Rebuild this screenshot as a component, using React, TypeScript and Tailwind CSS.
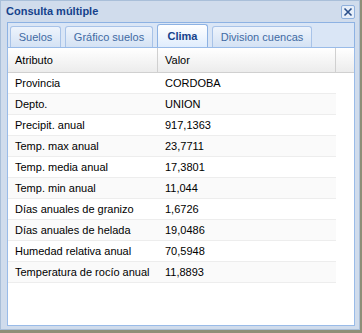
import React from 'react';

const rows: [string, string][] = [
  ['Provincia', 'CORDOBA'],
  ['Depto.', 'UNION'],
  ['Precipit. anual', '917,1363'],
  ['Temp. max anual', '23,7711'],
  ['Temp. media anual', '17,3801'],
  ['Temp. min anual', '11,044'],
  ['Días anuales de granizo', '1,6726'],
  ['Días anuales de helada', '19,0486'],
  ['Humedad relativa anual', '70,5948'],
  ['Temperatura de rocío anual', '11,8893'],
];

const tabs = [
  { label: 'Suelos', w: 'w-[51px]', active: false },
  { label: 'Gráfico suelos', w: 'w-[88px]', active: false },
  { label: 'Clima', w: 'w-[51px]', active: true },
  { label: 'Division cuencas', w: 'w-[100px]', active: false },
];

const App: React.FC = () => {
  return (
    <div className="w-[362px] h-[333px] bg-[#8e8e78] font-['Liberation_Sans',Arial,sans-serif] text-[11px]">
      <div className="w-[360px] h-[330px] flex flex-col border border-[#a9bfd9] bg-[#d0dcec]">
        {/* title bar */}
        <div className="h-[21px] flex items-center justify-between pl-[5px] pr-[4px]">
          <span className="font-bold text-[#15428b] leading-none">Consulta múltiple</span>
          <button className="w-[14px] h-[14px] mt-[1px] flex items-center justify-center border border-[#8fb0dc] bg-[#e6eef9] rounded-[2px]">
            <svg width="10" height="10" viewBox="0 0 10 10">
              <path d="M1.5 1.5 L8.5 8.5 M8.5 1.5 L1.5 8.5" stroke="#2a4f8a" strokeWidth="1.6" />
            </svg>
          </button>
        </div>

        <div className="ml-[6px] w-[348px] flex flex-col">
          {/* tab strip */}
          <div className="h-[25px] border-t border-l border-r border-[#8db2e3] bg-[#dae6f6] flex items-end pl-[2px] gap-[4px]">
            {tabs.map((t) =>
              t.active ? (
                <div
                  key={t.label}
                  className={`${t.w} h-[24px] -mb-[1px] flex items-center justify-center rounded-t-[3px] border border-b-0 border-[#8db2e3] bg-gradient-to-b from-white to-[#deecfd] font-bold text-[#15428b]`}
                >
                  {t.label}
                </div>
              ) : (
                <div
                  key={t.label}
                  className={`${t.w} h-[21px] flex items-center justify-center rounded-t-[3px] border border-b-0 border-[#a8c3e8] bg-gradient-to-b from-[#eef4fc] to-[#d4e2f4] text-[#416aa3]`}
                >
                  {t.label}
                </div>
              )
            )}
          </div>

          {/* body */}
          <div className="h-[279px] border border-[#99bbe8] bg-white text-black">
            <div className="h-[25px] flex border-b border-[#d0d0d0] bg-gradient-to-b from-white to-[#ececec]">
              <div className="w-[150px] flex items-center pl-[7px] border-r border-[#d0d0d0]">Atributo</div>
              <div className="w-[178px] flex items-center pl-[7px] border-r border-[#d0d0d0]">Valor</div>
              <div className="flex-1" />
            </div>
            {rows.map(([a, v], i) => (
              <div
                key={a}
                className={`w-[328px] h-[21px] flex items-center border-b border-[#ededed] ${i % 2 === 1 ? 'bg-[#fafafa]' : 'bg-white'}`}
              >
                <div className="w-[150px] pl-[7px] whitespace-nowrap">{a}</div>
                <div className="pl-[7px] whitespace-nowrap">{v}</div>
              </div>
            ))}
          </div>
        </div>
      </div>
    </div>
  );
};

export default App;
